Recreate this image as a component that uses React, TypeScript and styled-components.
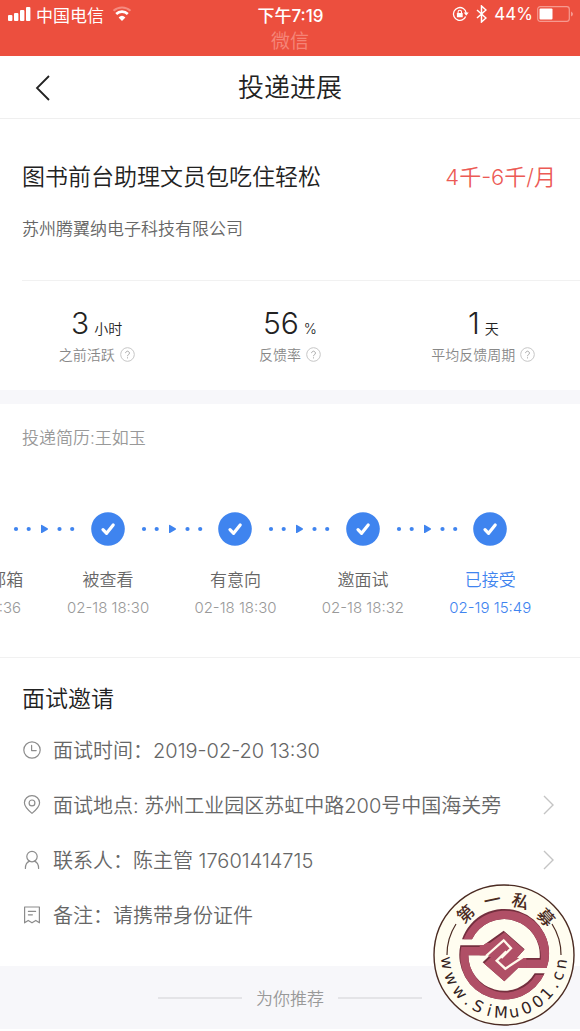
import React from "react";
import styled, { createGlobalStyle } from "styled-components";

const GlobalStyle = createGlobalStyle`
  * { box-sizing: border-box; }
  body {
    margin: 0;
    background: #fff;
    color: #222;
    font-family: Inter, "Noto Sans CJK SC", sans-serif;
    font-weight: 350;
  }
  h1, h2, p, ol, ul, dl, dd { margin: 0; padding: 0; font-weight: inherit; }
  ol, ul { list-style: none; }
  button { font: inherit; border: 0; background: none; padding: 0; cursor: pointer; }
  svg { display: block; flex: none; }
`;

const Page = styled.div`
  width: 100%;
  overflow: hidden;
`;

const TopBar = styled.header`
  height: 56px;
  background: #ec4f3e;
  color: #fff;
  font-size: 17px;
  font-weight: 400;
`;

const StatusRow = styled.div`
  display: grid;
  grid-template-columns: 1fr auto 1fr;
  align-items: center;
  height: 28px;
  padding: 0 7px 0 8px;
`;

const StatusGroup = styled.div<{ $end?: boolean }>`
  display: flex;
  align-items: center;
  justify-content: ${(p) => (p.$end ? "flex-end" : "flex-start")};
  gap: ${(p) => (p.$end ? "7px" : "4px")};
`;

const Carrier = styled.span`
  padding-right: 4px;
`;

const Charge = styled.span`
  display: flex;
  align-items: center;
  gap: 4px;
`;

const Clock = styled.span`
  font-weight: 500;
`;

const AppName = styled.div`
  text-align: center;
  font-size: 19px;
  line-height: 28px;
  color: #f58477;
`;

const NavBar = styled.nav`
  display: grid;
  grid-template-columns: 64px 1fr 64px;
  align-items: center;
  height: 63px;
  padding-top: 2px;
  border-bottom: 1px solid #efefef;
`;

const BackButton = styled.button`
  display: flex;
  justify-content: center;
  align-items: center;
  height: 48px;
  padding-left: 20px;
  color: #222;
`;

const PageTitle = styled.h1`
  text-align: center;
  font-size: 26px;
  line-height: 36px;
`;

const JobCard = styled.section`
  padding: 40px 0 0 22px;
`;

const JobHead = styled.div`
  display: flex;
  justify-content: space-between;
  align-items: center;
  padding-right: 24px;
`;

const Heading = styled.h2`
  font-size: 23px;
  line-height: 36px;
  color: #222;
`;

const Salary = styled.span`
  font-size: 22px;
  line-height: 36px;
  color: #ec5a55;
`;

const Company = styled.p`
  margin-top: 21px;
  padding-bottom: 38px;
  font-size: 17px;
  line-height: 26px;
  color: #666;
  border-bottom: 1px solid #f1f1f1;
`;

const Stats = styled.dl`
  display: grid;
  grid-template-columns: repeat(3, 1fr);
  padding: 24px 0;
  border-bottom: 14px solid #f7f7fa;
`;

const Stat = styled.div`
  display: flex;
  flex-direction: column-reverse;
  justify-content: flex-end;
  align-items: center;
`;

const StatValue = styled.dd`
  display: flex;
  align-items: baseline;
  gap: 5px;
  height: 38px;
  font-size: 30px;
  line-height: 36px;
`;

const StatUnit = styled.span`
  font-size: 14px;
  line-height: 20px;
`;

const StatLabel = styled.dt`
  display: flex;
  align-items: center;
  gap: 5px;
  font-size: 14px;
  line-height: 23px;
  color: #888;
`;

const Progress = styled.section`
  padding-top: 21px;
  border-bottom: 1px solid #f1f1f1;
`;

const ResumeName = styled.p`
  padding-left: 22px;
  font-size: 17px;
  line-height: 26px;
  color: #999;
`;

const Steps = styled.ol`
  display: flex;
  justify-content: flex-end;
  padding: 61px 26px 37px 0;
`;

const Step = styled.li<{ $current?: boolean }>`
  flex: 0 0 23%;
  display: flex;
  flex-direction: column;
  align-items: center;
  white-space: nowrap;
  color: ${(p) => (p.$current ? "#3f84ef" : "#666")};
`;

const Marker = styled.div`
  display: flex;
  justify-content: space-between;
  align-items: center;
  width: 100%;
  color: #3f84ef;
`;

const StepName = styled.span`
  margin-top: 20px;
  font-size: 17px;
  line-height: 28px;
`;

const StepTime = styled.time<{ $current?: boolean }>`
  margin-top: 2px;
  font-size: 15px;
  line-height: 24px;
  color: ${(p) => (p.$current ? "#3f84ef" : "#999")};
`;

const Invite = styled.section`
  padding: 23px 26px 24px 22px;
`;

const InviteRows = styled.ul`
  margin-top: 5px;
`;

const InviteRow = styled.li`
  display: flex;
  align-items: center;
  height: 55px;
  gap: 11px;
  font-size: 20px;
  color: #666;
`;

const RowText = styled.span`
  flex: 1;
  white-space: pre;
`;

const RowLink = styled.button`
  padding: 8px 0 8px 8px;
  color: #c4c4c4;
`;

const Footer = styled.footer`
  position: relative;
  display: flex;
  justify-content: center;
  align-items: center;
  gap: 14px;
  height: 63px;
  background: #f7f7fa;
  font-size: 17px;
  color: #999;
`;

const Rule = styled.span`
  width: 84px;
  height: 2px;
  background: #e4e4e7;
`;

const SealBadge = styled.div`
  position: absolute;
  right: 4px;
  bottom: 2px;
`;

const SignalIcon = () => (
  <svg width="24" height="16" viewBox="0 0 24 16" fill="#fff" aria-hidden="true">
    <rect x="0" y="9" width="4.4" height="6" rx="1" />
    <rect x="6" y="7" width="4.4" height="8" rx="1" />
    <rect x="12" y="4" width="4.4" height="11" rx="1" />
    <rect x="18" y="1" width="4.4" height="14" rx="1" />
  </svg>
);

const WifiIcon = () => (
  <svg width="20" height="16" viewBox="0 0 20 16" fill="none" aria-hidden="true">
    <path d="M1.5 4.8a12.5 12.5 0 0 1 17 0" stroke="#f58a7f" strokeWidth="2" />
    <path d="M4.2 8a8.3 8.3 0 0 1 11.6 0" stroke="#fff" strokeWidth="2.6" />
    <path d="M10 15l-3.4-3.6a5 5 0 0 1 6.8 0z" fill="#fff" />
  </svg>
);

const RotationLockIcon = () => (
  <svg width="17" height="16" viewBox="0 0 17 16" fill="none" stroke="#fff" aria-hidden="true">
    <path d="M11.2 13.4A6.4 6.4 0 1 1 14.2 7" strokeWidth="1.3" />
    <path d="M11.7 6.4h5l-2.5 3.4z" fill="#fff" stroke="none" />
    <path d="M11.2 13.4A6.4 6.4 0 0 0 13.6 10.4" strokeWidth="1.3" />
    <rect x="4.9" y="7" width="5.8" height="4.3" rx=".6" fill="#fff" stroke="none" />
    <path d="M6.1 7.4V6a1.7 1.7 0 0 1 3.4 0v1.4" strokeWidth="1.1" />
  </svg>
);

const BluetoothIcon = () => (
  <svg width="11" height="18" viewBox="0 0 11 18" fill="none" stroke="#fff" strokeWidth="1.5" aria-hidden="true">
    <path d="M1 5l9 8-4.5 4V1L10 5l-9 8" />
  </svg>
);

const BatteryIcon = () => (
  <svg width="36" height="16" viewBox="0 0 36 16" aria-hidden="true">
    <rect x=".7" y=".7" width="31.6" height="14.6" rx="2.5" fill="none" stroke="#f69a90" strokeWidth="1.2" />
    <rect x="2.5" y="2.5" width="13" height="11" rx="1" fill="#fff" />
    <path d="M34 5.5q2 1 2 2.5t-2 2.5z" fill="#f69a90" />
  </svg>
);

const HelpIcon = () => (
  <svg width="15" height="15" viewBox="0 0 15 15" fill="none" stroke="#c6c6c6" aria-hidden="true">
    <circle cx="7.5" cy="7.5" r="6.8" />
    <path d="M5.6 6.1a1.9 1.9 0 1 1 2.9 1.6c-.7.4-1 .7-1 1.5M7.5 10.3v1.1" stroke="#aaa" />
  </svg>
);

const CheckIcon = () => (
  <svg width="34" height="34" viewBox="0 0 34 34" aria-hidden="true">
    <circle cx="17" cy="17" r="16.8" fill="currentColor" />
    <path d="M12 17.6l3.6 3.7 6.6-8.3" fill="none" stroke="#fff" strokeWidth="3.2" strokeLinecap="round" strokeLinejoin="round" />
  </svg>
);

const LeadIn = () => (
  <svg width="36" height="10" viewBox="0 0 36 10" fill="currentColor" overflow="visible" aria-hidden="true">
    <path d="M-3 1.4Q-3 .4-2 1L3.6 4.3Q4.6 5 3.6 5.7L-2 9Q-3 9.4-3 8.4z" />
    <circle cx="15.5" cy="5" r="2.1" />
    <circle cx="28.2" cy="5" r="2.1" />
  </svg>
);

const LeadOut = ({ hidden }: { hidden: boolean }) => (
  <svg width="36" height="10" viewBox="0 0 36 10" fill="currentColor" aria-hidden="true">
    {!hidden && (
      <>
        <circle cx="8" cy="5" r="2.1" />
        <circle cx="20.7" cy="5" r="2.1" />
      </>
    )}
  </svg>
);

const RowIcon = ({ children }: { children: React.ReactNode }) => (
  <svg width="20" height="20" viewBox="-1 0 20 20" fill="none" stroke="#8c8c8c" strokeWidth="1.2" strokeLinecap="round" strokeLinejoin="round" aria-hidden="true">
    {children}
  </svg>
);

const Chevron = () => (
  <svg width="11" height="20" viewBox="0 0 11 20" fill="none" stroke="currentColor" strokeWidth="1.4" aria-hidden="true">
    <path d="M1 1l9 9-9 9" />
  </svg>
);

// Start point and rotation of each glyph so that its middle lies on the circle.
const onCircle = (angles: number[], widths: number[], radius: number, top: boolean) => {
  const xs: string[] = [];
  const ys: string[] = [];
  const turns: string[] = [];
  angles.forEach((deg, i) => {
    const turn = top ? deg + 90 : deg - 90;
    const a = (deg * Math.PI) / 180;
    const t = (turn * Math.PI) / 180;
    xs.push((radius * Math.cos(a) - (widths[i] / 2) * Math.cos(t)).toFixed(1));
    ys.push((radius * Math.sin(a) - (widths[i] / 2) * Math.sin(t)).toFixed(1));
    turns.push(String(turn));
  });
  return { x: xs.join(" "), y: ys.join(" "), rotate: turns.join(" ") };
};

const sealName = onCircle([-133, -102, -73, -42], [17, 17, 17, 17], 50, true);
const sealUrl = onCircle(
  [172, 156, 140, 128, 117, 105, 93, 80, 67, 54, 42, 31, 21, 9],
  [13, 13, 13, 5, 10, 4, 14, 10, 10, 10, 10, 5, 9, 10],
  63,
  false
);

const emblemPaths = [
  "M20 104A134 134 0 0 1 274 190H180V160H253A107 107 0 0 0 50 104z",
  "M268 206A134 134 0 0 1 15 122H104V152H39A107 107 0 0 0 238 206z",
  "M84 122L145 78L208 134L184 160V190H188L147 230L82 173L104 152V122z",
];

const Emblem = () => (
  <g transform="scale(.3333) translate(-146 -151)">
    <clipPath id="emblem">
      {emblemPaths.map((d) => (
        <path key={d} d={d} />
      ))}
    </clipPath>
    <g clipPath="url(#emblem)">
      <rect x="0" y="0" width="300" height="300" fill="#742f3e" />
      <g fill="#b04f66" transform="translate(3 5)">
        {emblemPaths.map((d) => (
          <path key={d} d={d} />
        ))}
        <path d="M70 110H110V150H70zM170 155H210V185H170z" />
      </g>
    </g>
    <path d="M92 154L145 107L167 131L138 160M202 158L150 192L124 168L153 140" fill="none" stroke="#fffbec" strokeWidth="7" />
  </g>
);

const Seal = () => (
  <svg width="144" height="144" viewBox="-72 -72 144 144" role="img" aria-label="第一私募">
    <circle r="70" fill="#fffdf0" stroke="#4b2b22" strokeWidth="1.4" />
    <path d="M-57 0A57 57 0 0 1-48-31M57 0A57 57 0 0 0 48-31" fill="none" stroke="#4b2b22" strokeWidth="1.2" />
    <Emblem />
    <text {...sealName} fontSize="17" fill="#4b2b22" fontFamily="'Noto Sans CJK SC', sans-serif" fontWeight="500">第一私募</text>
    <text {...sealUrl} fontSize="16" fill="#33231f" fontFamily="'DejaVu Sans', sans-serif" fontWeight="400">www.SiMu001.cn</text>
  </svg>
);

const stats = [
  { value: "3", unit: "小时", label: "之前活跃" },
  { value: "56", unit: "%", label: "反馈率" },
  { value: "1", unit: "天", label: "平均反馈周期" },
];

const steps = [
  { name: "投递到邮箱", time: "02-18 17:36" },
  { name: "被查看", time: "02-18 18:30" },
  { name: "有意向", time: "02-18 18:30" },
  { name: "邀面试", time: "02-18 18:32" },
  { name: "已接受", time: "02-19 15:49" },
];

const inviteRows = [
  {
    text: "面试时间：2019-02-20 13:30",
    icon: (
      <>
        <circle cx="9" cy="10" r="8.2" />
        <path d="M8.6 5.4v5.2h4.6" />
      </>
    ),
  },
  {
    text: "面试地点: 苏州工业园区苏虹中路200号中国海关旁",
    link: "查看地点",
    icon: (
      <>
        <path d="M9 18.4C5.6 15.6 1.4 12 1.4 7.8a7.6 7.2 0 0 1 15.2 0C16.6 12 12.4 15.6 9 18.4z" />
        <circle cx="9" cy="7.9" r="2.9" />
      </>
    ),
  },
  {
    text: "联系人：陈主管 17601414715",
    link: "联系",
    icon: (
      <>
        <circle cx="9" cy="6.6" r="5.2" />
        <path d="M2.4 18.4c0-3.6 1.6-6.4 4.3-7.3M15.6 18.4c0-3.6-1.6-6.4-4.3-7.3" />
      </>
    ),
  },
  {
    text: "备注：请携带身份证件",
    icon: (
      <>
        <path d="M1.6 2h14.8v15.8l-3.6-2.4-3.8 2.4-3.8-2.4-3.6 2.4z" />
        <path d="M5.4 6.4h7.2M5.4 9.8h4" />
      </>
    ),
  },
];

export default function App() {
  return (
    <Page>
      <GlobalStyle />
      <TopBar>
        <StatusRow>
          <StatusGroup>
            <SignalIcon />
            <Carrier>中国电信</Carrier>
            <WifiIcon />
          </StatusGroup>
          <Clock>下午7:19</Clock>
          <StatusGroup $end>
            <RotationLockIcon />
            <BluetoothIcon />
            <Charge>
              44%
              <BatteryIcon />
            </Charge>
          </StatusGroup>
        </StatusRow>
        <AppName>微信</AppName>
      </TopBar>
      <NavBar>
        <BackButton aria-label="返回">
          <svg width="15" height="26" viewBox="0 0 15 26" fill="none" stroke="currentColor" strokeWidth="1.8" aria-hidden="true">
            <path d="M14 1L2 13l12 12" />
          </svg>
        </BackButton>
        <PageTitle>投递进展</PageTitle>
      </NavBar>
      <main>
        <JobCard>
          <JobHead>
            <Heading>图书前台助理文员包吃住轻松</Heading>
            <Salary>4千-6千/月</Salary>
          </JobHead>
          <Company>苏州腾翼纳电子科技有限公司</Company>
        </JobCard>
        <Stats>
          {stats.map((s) => (
            <Stat key={s.label}>
              <StatLabel>
                {s.label}
                <HelpIcon />
              </StatLabel>
              <StatValue>
                {s.value}
                <StatUnit>{s.unit}</StatUnit>
              </StatValue>
            </Stat>
          ))}
        </Stats>
        <Progress>
          <ResumeName>投递简历:王如玉</ResumeName>
          <Steps>
            {steps.map((s, i) => {
              const current = i === steps.length - 1;
              return (
                <Step key={s.name} $current={current}>
                  <Marker>
                    <LeadIn />
                    <CheckIcon />
                    <LeadOut hidden={current} />
                  </Marker>
                  <StepName>{s.name}</StepName>
                  <StepTime $current={current}>{s.time}</StepTime>
                </Step>
              );
            })}
          </Steps>
        </Progress>
        <Invite>
          <Heading>面试邀请</Heading>
          <InviteRows>
            {inviteRows.map((r) => (
              <InviteRow key={r.text}>
                <RowIcon>{r.icon}</RowIcon>
                <RowText>{r.text}</RowText>
                {r.link && (
                  <RowLink aria-label={r.link}>
                    <Chevron />
                  </RowLink>
                )}
              </InviteRow>
            ))}
          </InviteRows>
        </Invite>
      </main>
      <Footer>
        <Rule />
        <span>为你推荐</span>
        <Rule />
        <SealBadge>
          <Seal />
        </SealBadge>
      </Footer>
    </Page>
  );
}
